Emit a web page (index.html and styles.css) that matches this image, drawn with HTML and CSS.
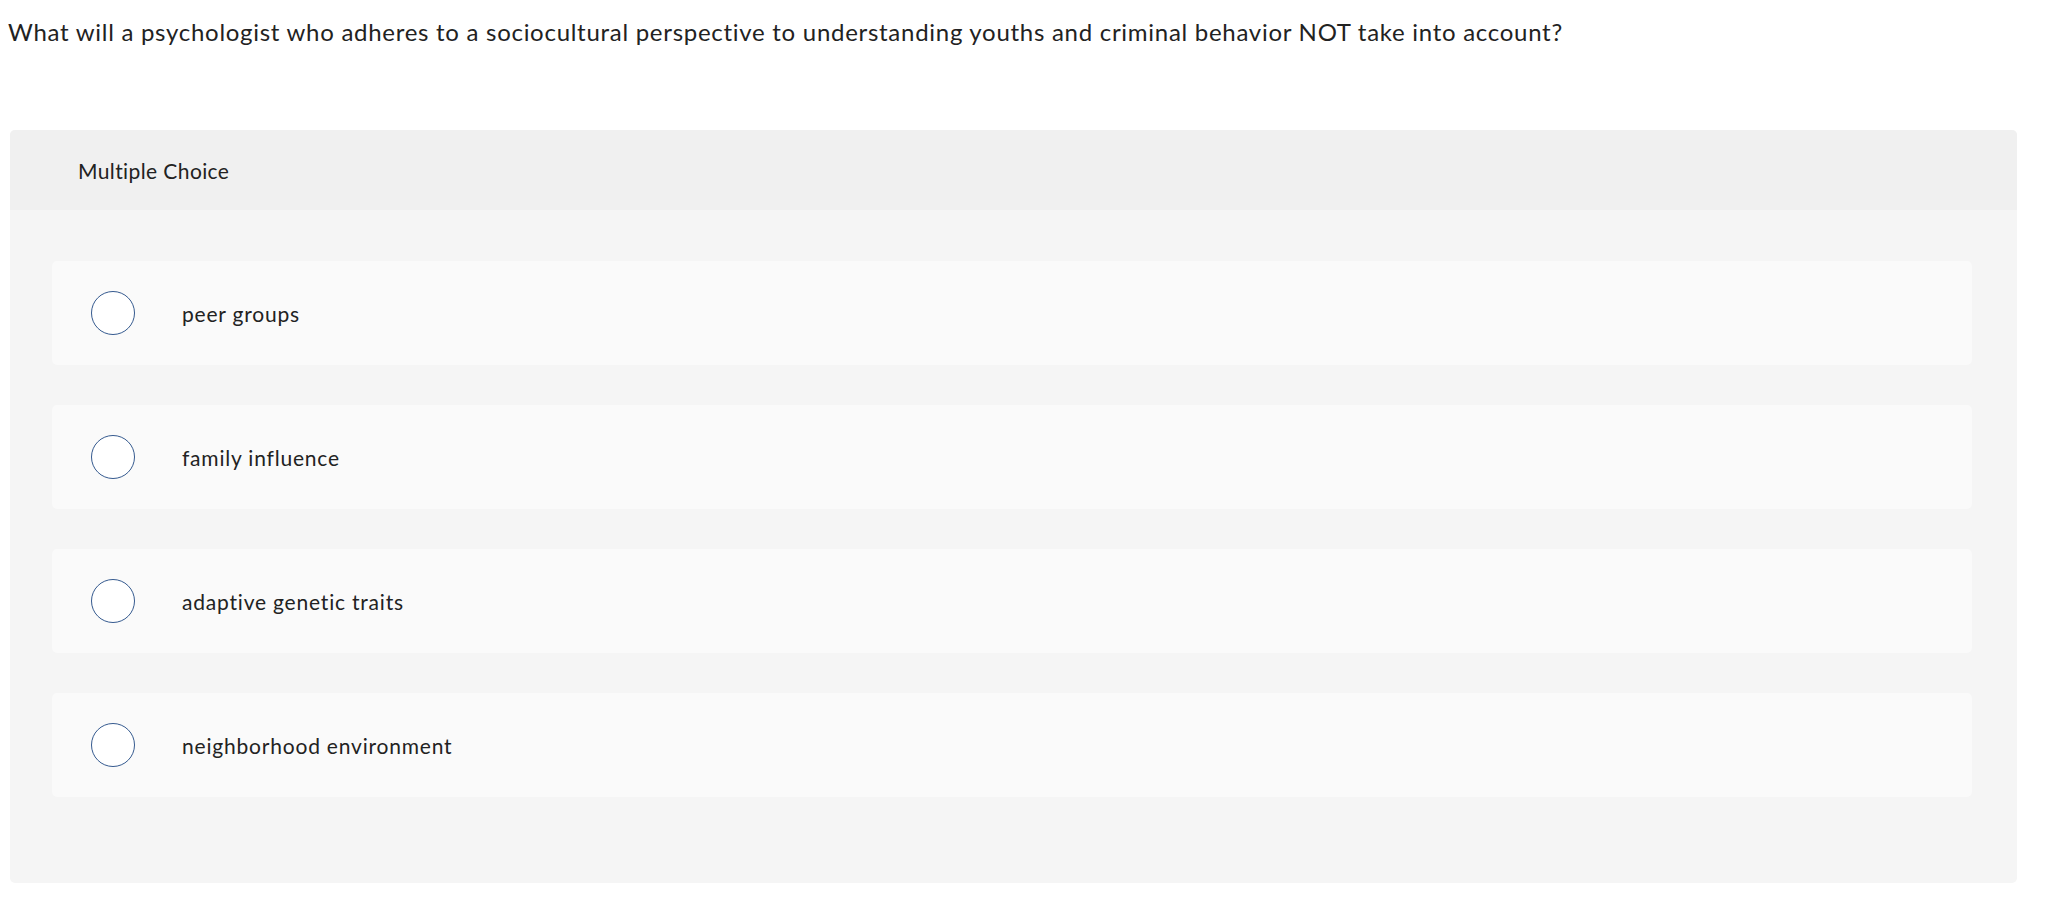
FILE: index.html
```html
<!DOCTYPE html>
<html>
<head>
<meta charset="utf-8">
<link rel="stylesheet" href="styles.css">
</head>
<body>
<div class="page">
  <p class="question">What will a psychologist who adheres to a sociocultural perspective to understanding youths and criminal behavior NOT take into account?</p>
  <div class="panel">
    <div class="panel-head">Multiple Choice</div>
    <div class="panel-body">
      <div class="option"><span class="radio"></span><span class="label">peer groups</span></div>
      <div class="option"><span class="radio"></span><span class="label">family influence</span></div>
      <div class="option"><span class="radio"></span><span class="label">adaptive genetic traits</span></div>
      <div class="option"><span class="radio"></span><span class="label">neighborhood environment</span></div>
    </div>
  </div>
</div>
</body>
</html>
```
FILE: styles.css
```css
html, body {
  margin: 0;
  padding: 0;
  background: #ffffff;
}
.page {
  font-family: "Lato", "Liberation Sans", sans-serif;
  color: #222222;
  padding: 0 43px 0 10px;
}
.question {
  margin: 0 0 0 -2px;
  padding-top: 16px;
  font-size: 24px;
  line-height: 32px;
  letter-spacing: 0.72px;
  height: 130px;
  box-sizing: border-box;
}
.panel {
  border-radius: 5px;
  overflow: hidden;
  background: #f5f5f5;
}
.panel-head {
  background: #f0f0f0;
  height: 80px;
  display: flex;
  align-items: center;
  padding-left: 68px;
  font-size: 21px;
  letter-spacing: 0.4px;
}
.panel-body {
  padding: 51px 45px 86px 42px;
  display: flex;
  flex-direction: column;
  gap: 40px;
}
.option {
  background: #fafafa;
  border-radius: 5px;
  height: 104px;
  display: flex;
  align-items: center;
  padding-left: 39px;
}
.radio {
  width: 42px;
  height: 42px;
  border: 1.5px solid #355a8f;
  border-radius: 50%;
  background: #ffffff;
  flex: none;
}
.label {
  margin-left: 47px;
  font-size: 21px;
  letter-spacing: 0.8px;
}
```
